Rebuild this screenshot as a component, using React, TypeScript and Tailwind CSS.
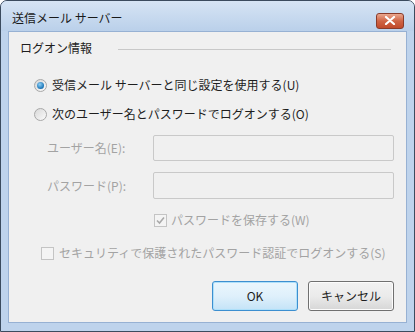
import React from 'react';

const font = { fontFamily: '"Noto Sans CJK JP", "Noto Sans", sans-serif' };

function Radio({ checked }: { checked?: boolean }) {
  return (
    <span className="w-[13px] h-[13px] rounded-full border border-[#a8a8a8] bg-gradient-to-br from-[#d8d8d8] to-[#fbfbfb] flex items-center justify-center shrink-0">
      {checked && (
        <span className="w-[7px] h-[7px] rounded-full bg-[radial-gradient(circle_at_40%_35%,#8fd0f7,#1a74b5_70%,#0d4e86)]" />
      )}
    </span>
  );
}

function Check({ checked }: { checked?: boolean }) {
  return (
    <span className="w-[13px] h-[13px] border border-[#c4c4c4] bg-[#f4f4f4] flex items-center justify-center shrink-0">
      {checked && (
        <svg width="9" height="9" viewBox="0 0 9 9">
          <path d="M1 4.5 L3.5 7 L8 1.5" fill="none" stroke="#a9a9a9" strokeWidth="1.6" />
        </svg>
      )}
    </span>
  );
}

export default function App() {
  return (
    <div style={font} className="w-[415px] h-[332px] bg-white">
      <div className="w-[415px] h-[332px] flex flex-col border border-[#3b4b5e] rounded-t-[7px] bg-[#bed3ec] overflow-hidden">
        <div className="h-[30px] flex items-center justify-between pl-[11px] pr-[10px] bg-gradient-to-b from-[#d6e4f4] to-[#bad0ea] shrink-0">
          <span className="text-[12px] text-[#1a1a1a] mt-[4px]">送信メール サーバー</span>
          <div className="w-[28px] h-[16px] mt-[9px] rounded-[3px] border border-[#8a3b2a] bg-gradient-to-b from-[#e9a78f] via-[#cf6445] to-[#c14a2b] flex items-center justify-center">
            <svg width="12" height="9" viewBox="0 0 12 9">
              <path d="M2 1 L10 8 M10 1 L2 8" stroke="#ffffff" strokeWidth="2.2" strokeLinecap="round" />
            </svg>
          </div>
        </div>
        <div className="flex-1 px-[7px] pb-[8px] flex">
          <div className="flex-1 border border-[#97b1d3] bg-[#f0f0f0] flex flex-col text-[12px] text-[#1e1e1e]">
            <div className="flex items-center mt-[7px] pl-[11px] pr-[15px]">
              <span>ログオン情報</span>
              <span className="flex-1 h-px bg-[#c8c8c8] ml-[26px] mt-[2px]" />
            </div>
            <div className="flex items-center gap-[5px] pl-[25px] mt-[19px]">
              <Radio checked />
              <span>受信メール サーバーと同じ設定を使用する(U)</span>
            </div>
            <div className="flex items-center gap-[5px] pl-[25px] mt-[11px]">
              <Radio />
              <span>次のユーザー名とパスワードでログオンする(O)</span>
            </div>
            <div className="grid grid-cols-[106px_1fr] gap-y-[11px] items-center pl-[38px] pr-[12px] mt-[12px] text-[#a3a3a3]">
              <span>ユーザー名(E):</span>
              <div className="h-[26px] border border-[#c9c9c9] rounded-[2px] bg-[#f0f0f0]" />
              <span>パスワード(P):</span>
              <div className="h-[27px] border border-[#c9c9c9] rounded-[2px] bg-[#f0f0f0]" />
            </div>
            <div className="flex items-center gap-[4px] pl-[145px] mt-[12px] text-[#a3a3a3]">
              <Check checked />
              <span>パスワードを保存する(W)</span>
            </div>
            <div className="flex items-center gap-[5px] pl-[32px] mt-[15px] text-[#a3a3a3]">
              <Check />
              <span>セキュリティで保護されたパスワード認証でログオンする(S)</span>
            </div>
            <div className="flex justify-end gap-[10px] pr-[12px] mt-[19px]">
              <button className="w-[86px] h-[30px] rounded-[3px] border border-[#3c8fd0] bg-gradient-to-b from-[#eaf6fd] via-[#dff0fb] to-[#c4e3f7] shadow-[inset_0_0_0_1px_#aee0fa] text-[12px] text-[#1e1e1e]">
                OK
              </button>
              <button className="w-[86px] h-[30px] rounded-[3px] border border-[#707070] bg-gradient-to-b from-[#f2f2f2] via-[#ebebeb] to-[#d6d6d6] shadow-[inset_0_0_0_1px_#fcfcfc] text-[12px] text-[#1e1e1e]">
                キャンセル
              </button>
            </div>
          </div>
        </div>
      </div>
    </div>
  );
}
